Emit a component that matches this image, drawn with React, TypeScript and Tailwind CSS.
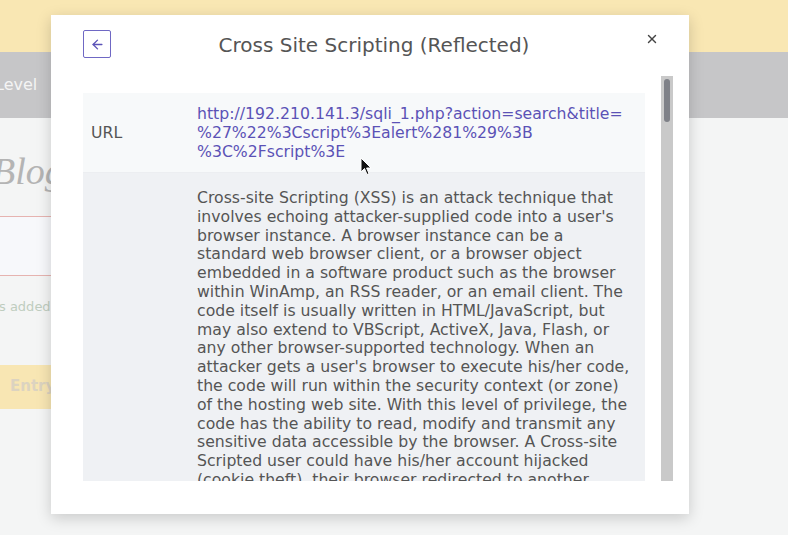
import { ArrowLeft, X } from 'lucide-react';

const DESC =
  "Cross-site Scripting (XSS) is an attack technique that involves echoing attacker-supplied code into a user's browser instance. A browser instance can be a standard web browser client, or a browser object embedded in a software product such as the browser within WinAmp, an RSS reader, or an email client. The code itself is usually written in HTML/JavaScript, but may also extend to VBScript, ActiveX, Java, Flash, or any other browser-supported technology. When an attacker gets a user's browser to execute his/her code, the code will run within the security context (or zone) of the hosting web site. With this level of privilege, the code has the ability to read, modify and transmit any sensitive data accessible by the browser. A Cross-site Scripted user could have his/her account hijacked (cookie theft), their browser redirected to another location, or possibly shown fraudulent content delivered by the web site they are visiting.";

function Backdrop() {
  return (
    <div className="flex h-full flex-col">
      <div className="h-[52px] bg-[#f9e7b3]" />
      <div className="flex h-[66px] items-center bg-[#c6c6c8] text-[16px] text-[#f4f4f4]">
        <span className="-ml-[5px]">Level</span>
      </div>
      <div className="flex flex-1 flex-col bg-[#f4f5f5]">
        <div className="ml-[-8px] mt-[34px] text-[38px] font-light italic leading-none text-[#b4b4b4] [font-family:'Liberation_Serif',serif]">
          Blog
        </div>
        <div className="mt-[26px] h-[60px] w-[52px] border-y border-[#e6b3b0] bg-[#f7f8fb]" />
        <div className="mt-[21px] -ml-[1px] text-[13px] text-[#bfcdbf]">s added</div>
        <div className="mt-[48px] flex h-[44px] w-[52px] items-center bg-[#f8e6b3] pl-[10px] text-[15px] font-bold text-[#dcd3c0]">
          Entry
        </div>
      </div>
    </div>
  );
}

function Cursor() {
  return (
    <svg className="absolute left-[360px] top-[157px]" width="12" height="19" viewBox="0 0 12 19">
      <path d="M1 1 L1 15 L4.5 11.5 L7 17.5 L9 16.6 L6.6 11 L11 11 Z" fill="#111" stroke="#fff" strokeWidth="1" />
    </svg>
  );
}

export default function App() {
  return (
    <div className="relative h-[535px] w-[788px] overflow-hidden [font-family:'DejaVu_Sans',sans-serif]">
      <Backdrop />

      <div className="absolute left-[51px] top-[15px] flex h-[499px] w-[638px] flex-col bg-white shadow-[0_4px_14px_rgba(0,0,0,0.18)]">
        <div className="flex h-[61px] items-start pl-[32px] pr-[30px] pt-[15px]">
          <button
            type="button"
            className="flex h-[28px] w-[28px] items-center justify-center rounded-[2px] border border-[#6f68c4] text-[#5b53b8]"
          >
            <ArrowLeft size={15} strokeWidth={2.2} />
          </button>
          <div className="flex-1 pr-[8px] pt-[1px] text-center text-[20px] leading-[28px] text-[#555]">
            Cross Site Scripting (Reflected)
          </div>
          <button type="button" className="mt-[2px] text-[#444]">
            <X size={14} strokeWidth={2.4} />
          </button>
        </div>

        <div className="flex h-[405px] pl-[32px] pr-[16px]">
          <div className="flex-1 overflow-hidden pt-[17px]">
            <div className="flex bg-[#f7f9fa] pb-[11px] pt-[11px] text-[15.7px] leading-[19px]">
              <div className="flex w-[114px] items-center pl-[8px] text-[#555]">URL</div>
              <div className="w-[440px] break-all text-[#5b52b6]">
                http://192.210.141.3/sqli_1.php?action=search&amp;title=
                <br />
                %27%22%3Cscript%3Ealert%281%29%3B
                <br />
                %3C%2Fscript%3E
              </div>
            </div>
            <div className="flex border-t border-[#eceef1] bg-[#eff1f4] pt-[16px] text-[15.7px] leading-[18.8px] text-[#555]">
              <div className="w-[114px]" />
              <div className="w-[438px]">{DESC}</div>
            </div>
          </div>
          <div className="ml-[16px] flex w-[12px] justify-center bg-[#c9c9c9] pt-[3px]">
            <div className="h-[43px] w-[6px] rounded-full bg-[#7f8188]" />
          </div>
        </div>
      </div>

      <Cursor />
    </div>
  );
}
